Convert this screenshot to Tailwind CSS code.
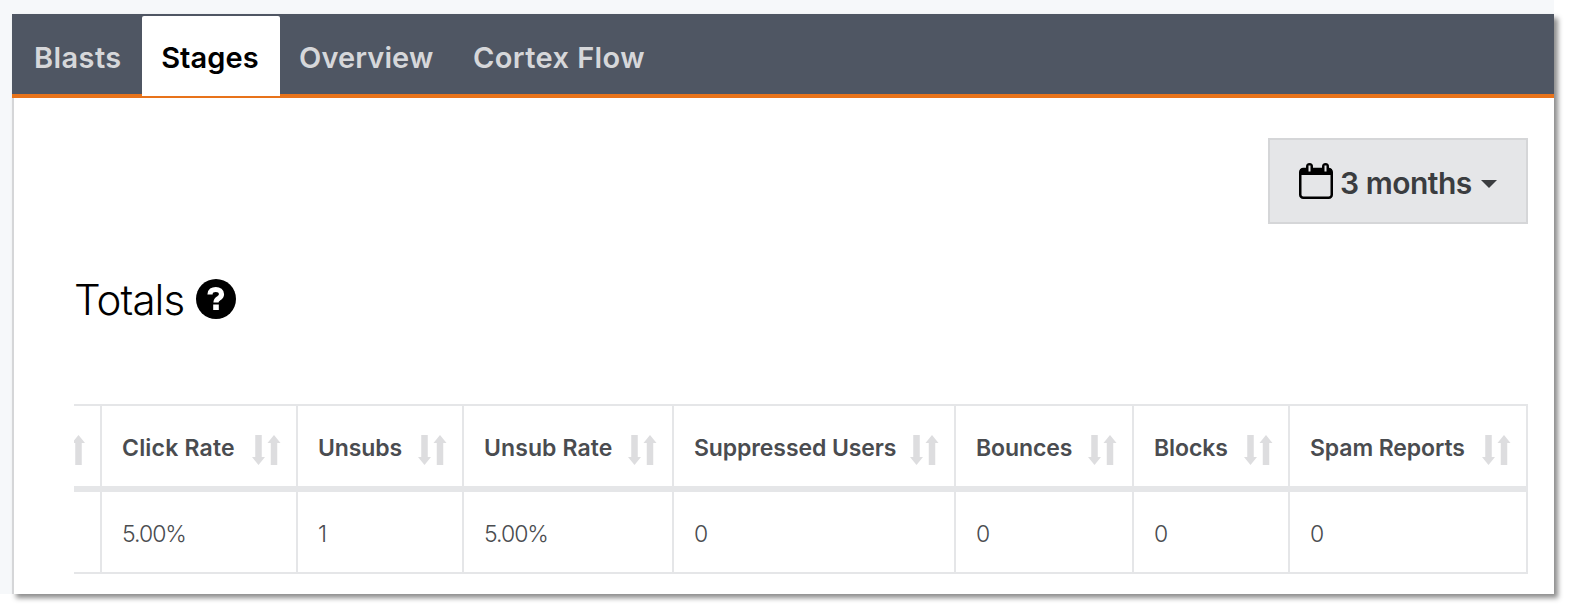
<!DOCTYPE html>
<html lang="en">
<head>
    <meta charset="UTF-8">
    <title>Stages</title>
    <script src="https://cdn.jsdelivr.net/npm/@tailwindcss/browser@4"></script>
</head>
<body class="h-[609px] overflow-hidden bg-white font-['Inter',sans-serif]">
    <div class="w-[1554px] h-[594px] bg-[#f6f8fa] pl-[12px] pt-[14px]">
        <div class="w-[1542px] h-[580px] bg-white shadow-[4px_4px_5px_rgba(0,0,0,0.45)]">
            <!-- tabs -->
            <div class="flex h-[84px] items-start bg-[#4f5663] border-b-4 border-[#e8731a] pl-[22px] pt-[2px] text-[29px] font-semibold tracking-[0.1px] text-[#d6d7da]">
                <a class="h-[80px] pt-[20px] w-[108px] tracking-[0.4px]">Blasts</a>
                <a class="h-[80px] pt-[20px] pr-[2px] w-[138px] bg-white text-black text-center rounded-t-[2px]">Stages</a>
                <a class="h-[80px] pt-[20px] pl-[19px] w-[174px]">Overview</a>
                <a class="h-[80px] pt-[20px] pl-[19px] tracking-[0.4px]">Cortex Flow</a>
            </div>

            <div class="h-[496px] border-l-2 border-[#d5d6d8] pl-[60px] pr-[26px]">
                <div class="flex justify-end pt-[40px]">
                    <button class="flex items-center w-[260px] h-[86px] pl-[29px] bg-[#e5e6e8] border-2 border-[#d5d6d8] text-[30px] font-semibold tracking-[-0.5px] text-[#3b3d40]">
                        <svg width="34" height="36" viewBox="0 0 34 36" class="mr-[7px]" fill="none">
                            <rect x="1.250" y="6" width="31.500" height="28.750" rx="3" stroke="#000" stroke-width="2.500"/>
                            <path d="M1 6h32v6H1z" fill="#000"/>
                            <rect x="7" y="0" width="7" height="11" rx="3.500" fill="#000"/>
                            <rect x="9.500" y="2.500" width="2" height="6" fill="#e5e6e8"/>
                            <rect x="23" y="0" width="7" height="11" rx="3.500" fill="#000"/>
                            <rect x="25.500" y="2.500" width="2" height="6" fill="#e5e6e8"/>
                        </svg>
                        <span class="mt-[4px]">3 months</span>
                        <svg width="16" height="8" viewBox="0 0 16 8" class="ml-[9px] mt-[6px]"><path d="M0 0h16L8 8z" fill="#3b3d40"/></svg>
                    </button>
                </div>

                <div class="flex items-center mt-[50px] h-[50px] text-[42px] font-light tracking-[-0.9px] text-black">
                    Totals
                    <svg width="40" height="40" viewBox="0 0 40 40" class="ml-[12px]">
                        <circle cx="20" cy="20" r="20" fill="#000"/>
                        <path d="M14 15.500c0-3.500 2.700-5 5.800-5 3.300 0 5.700 1.800 5.700 4.700 0 2.200-1.300 3.200-2.900 4.200-1.700 1-2.600 2-2.600 4.100" fill="none" stroke="#fff" stroke-width="5.200"/>
                        <rect x="17.200" y="25.500" width="5.600" height="5.500" fill="#fff"/>
                    </svg>
                </div>

                <!-- table, scrolled sideways so the first column is cut off -->
                <div class="mt-[80px] h-[170px] overflow-hidden border-t-2 border-b-2 border-[#e5e6e8] text-[#4a4c50]">
                    <div class="grid grid-cols-[28px_196px_166px_210px_282px_178px_156px_238px] grid-rows-[80px_6px_80px] text-[23px]">
                        <div class="flex justify-end items-center pt-[4px] border-r-2 border-[#e5e6e8] overflow-hidden">
                            <svg width="13" height="30" viewBox="0 0 13 30" class="mr-[15px] mt-[4px] shrink-0"><path d="M6.500 0L13 8H9.750v22h-6.500V8H0z" fill="#dddddf"/></svg>
                        </div>
                        <div class="flex items-center justify-between pl-[20px] pr-[15px] pt-[4px] border-r-2 border-[#e5e6e8] font-semibold tracking-[0.2px]">Click Rate
                            <svg width="29" height="30" viewBox="0 0 29 30" class="mt-[4px]"><path d="M6.500 30L0 22h3.250V0h6.500v22H13zM22 0l6.500 8h-3.250v22h-6.500V8H15.500z" fill="#dddddf"/></svg></div>
                        <div class="flex items-center justify-between pl-[20px] pr-[15px] pt-[4px] border-r-2 border-[#e5e6e8] font-semibold tracking-[-0.1px]">Unsubs
                            <svg width="29" height="30" viewBox="0 0 29 30" class="mt-[4px]"><path d="M6.500 30L0 22h3.250V0h6.500v22H13zM22 0l6.500 8h-3.250v22h-6.500V8H15.500z" fill="#dddddf"/></svg></div>
                        <div class="flex items-center justify-between pl-[20px] pr-[15px] pt-[4px] border-r-2 border-[#e5e6e8] font-semibold tracking-[0.1px]">Unsub Rate
                            <svg width="29" height="30" viewBox="0 0 29 30" class="mt-[4px]"><path d="M6.500 30L0 22h3.250V0h6.500v22H13zM22 0l6.500 8h-3.250v22h-6.500V8H15.500z" fill="#dddddf"/></svg></div>
                        <div class="flex items-center justify-between pl-[20px] pr-[15px] pt-[4px] border-r-2 border-[#e5e6e8] font-semibold tracking-[-0.1px]">Suppressed Users
                            <svg width="29" height="30" viewBox="0 0 29 30" class="mt-[4px]"><path d="M6.500 30L0 22h3.250V0h6.500v22H13zM22 0l6.500 8h-3.250v22h-6.500V8H15.500z" fill="#dddddf"/></svg></div>
                        <div class="flex items-center justify-between pl-[20px] pr-[15px] pt-[4px] border-r-2 border-[#e5e6e8] font-semibold tracking-[-0.1px]">Bounces
                            <svg width="29" height="30" viewBox="0 0 29 30" class="mt-[4px]"><path d="M6.500 30L0 22h3.250V0h6.500v22H13zM22 0l6.500 8h-3.250v22h-6.500V8H15.500z" fill="#dddddf"/></svg></div>
                        <div class="flex items-center justify-between pl-[20px] pr-[15px] pt-[4px] border-r-2 border-[#e5e6e8] font-semibold tracking-[-0.1px]">Blocks
                            <svg width="29" height="30" viewBox="0 0 29 30" class="mt-[4px]"><path d="M6.500 30L0 22h3.250V0h6.500v22H13zM22 0l6.500 8h-3.250v22h-6.500V8H15.500z" fill="#dddddf"/></svg></div>
                        <div class="flex items-center justify-between pl-[20px] pr-[15px] pt-[4px] border-r-2 border-[#e5e6e8] font-semibold tracking-[-0.1px]">Spam Reports
                            <svg width="29" height="30" viewBox="0 0 29 30" class="mt-[4px]"><path d="M6.500 30L0 22h3.250V0h6.500v22H13zM22 0l6.500 8h-3.250v22h-6.500V8H15.500z" fill="#dddddf"/></svg></div>

                        <div class="col-span-8 bg-[#e5e6e8]"></div>

                        <div class="border-r-2 border-[#e5e6e8]"></div>
                        <div class="flex items-center pl-[20px] pt-[4px] border-r-2 border-[#e5e6e8] font-light tracking-[-1px]">5.00%</div>
                        <div class="flex items-center pl-[20px] pt-[4px] border-r-2 border-[#e5e6e8] font-light">1</div>
                        <div class="flex items-center pl-[20px] pt-[4px] border-r-2 border-[#e5e6e8] font-light tracking-[-1px]">5.00%</div>
                        <div class="flex items-center pl-[20px] pt-[4px] border-r-2 border-[#e5e6e8] font-light">0</div>
                        <div class="flex items-center pl-[20px] pt-[4px] border-r-2 border-[#e5e6e8] font-light">0</div>
                        <div class="flex items-center pl-[20px] pt-[4px] border-r-2 border-[#e5e6e8] font-light">0</div>
                        <div class="flex items-center pl-[20px] pt-[4px] border-r-2 border-[#e5e6e8] font-light">0</div>
                    </div>
                </div>
            </div>
        </div>
    </div>
</body>
</html>
